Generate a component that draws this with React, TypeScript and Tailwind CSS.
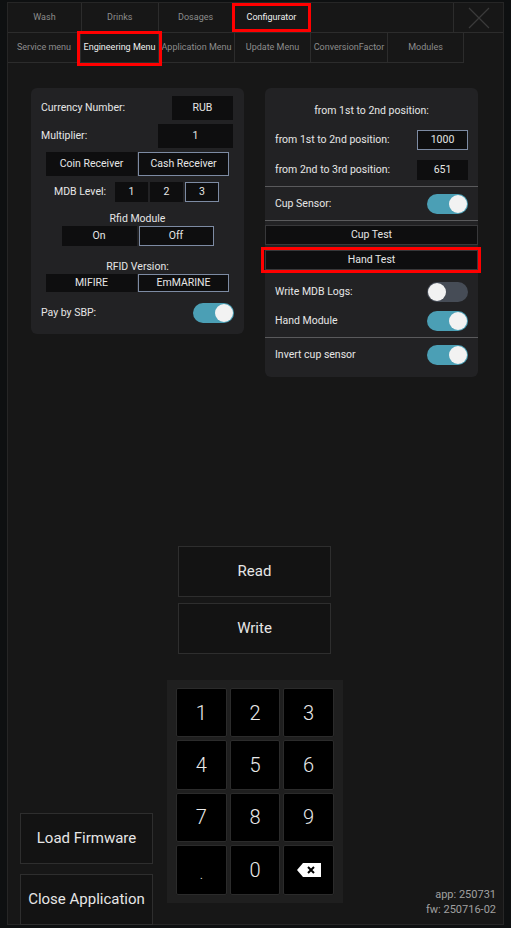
import React from "react";

const font = { fontFamily: "Roboto, 'Liberation Sans', sans-serif" };

function Toggle({ on }: { on: boolean }) {
  return (
    <div
      className={
        "w-[41px] h-[20px] rounded-full flex items-center px-[1px] " +
        (on ? "bg-[#4b9fb5] justify-end" : "bg-[#464c56] justify-start")
      }
    >
      <div className="w-[18px] h-[18px] rounded-full bg-[#f2f2f2]" />
    </div>
  );
}

function Box({ children, w, active }: { children: React.ReactNode; w: string; active?: boolean }) {
  return (
    <div
      className={
        w +
        " h-full flex items-center justify-center bg-[#0e0e0f] border " +
        (active ? "border-[#7d8ba3]" : "border-[#0e0e0f]")
      }
    >
      {children}
    </div>
  );
}

export default function App() {
  const keys = ["1", "2", "3", "4", "5", "6", "7", "8", "9", ".", "0", "del"];
  return (
    <div style={font} className="w-[511px] h-[928px] bg-[#0e1011] relative overflow-hidden text-[#e6e6e6]">
      <div className="absolute left-[7px] top-[2px] w-[497px] h-[923px] bg-[#171717] border border-[#262626]">
        {/* Tab row 1 */}
        <div className="flex h-[30px] text-[9px] text-[#8c8c8c]">
          <div className="w-[74px] border-r border-b border-[#2c2c2c] flex items-center justify-center">Wash</div>
          <div className="w-[77px] border-r border-b border-[#2c2c2c] flex items-center justify-center">Drinks</div>
          <div className="w-[75px] border-r border-b border-[#2c2c2c] flex items-center justify-center">Dosages</div>
          <div className="w-[77px] border-r border-b border-[#2c2c2c] flex items-center justify-center text-[#f0f0f0] relative">
            Configurator
            <div className="absolute left-[-2px] top-[0px] w-[79px] h-[29px] border-[3px] border-[#ff0000]" />
          </div>
          <div className="w-[143px] border-b border-[#2c2c2c]" />
          <div className="w-[50px] border-l border-b border-[#2c2c2c] flex items-center justify-center">
            <svg width="24" height="24" viewBox="0 0 24 24">
              <path d="M2 2 L22 22 M22 2 L2 22" stroke="#3a3a3a" strokeWidth="1.2" />
            </svg>
          </div>
        </div>
        {/* Tab row 2 */}
        <div className="flex h-[30px] text-[9px] text-[#8c8c8c]">
          <div className="w-[73px] border-r border-b border-[#2c2c2c] flex items-center justify-center">Service menu</div>
          <div className="w-[78px] border-r border-b border-[#2c2c2c] flex items-center justify-center text-[#f0f0f0] relative">
            Engineering Menu
            <div className="absolute left-[-4px] top-[-2px] w-[85px] h-[35px] border-[3px] border-[#ff0000]" />
          </div>
          <div className="w-[76px] border-r border-b border-[#2c2c2c] flex items-center justify-center">Application Menu</div>
          <div className="w-[76px] border-r border-b border-[#2c2c2c] flex items-center justify-center">Update Menu</div>
          <div className="w-[77px] border-r border-b border-[#2c2c2c] flex items-center justify-center">ConversionFactor</div>
          <div className="w-[76px] border-r border-b border-[#2c2c2c] flex items-center justify-center">Modules</div>
        </div>

        {/* Panels */}
        <div className="flex items-start gap-[21px] ml-[23px] mt-[25px]">
          {/* Left panel */}
          <div className="w-[213px] h-[246px] bg-[#222224] rounded-[6px] pt-[8px] text-[10.5px]">
            <div className="flex items-center justify-between h-[24px] pl-[10px] pr-[11px]">
              <span>Currency Number:</span>
              <Box w="w-[61px]">RUB</Box>
            </div>
            <div className="flex items-center justify-between h-[24px] mt-[4px] pl-[10px] pr-[11px]">
              <span>Multiplier:</span>
              <Box w="w-[75px]">1</Box>
            </div>
            <div className="flex h-[24px] mt-[4px] px-[15px] gap-[1px]">
              <Box w="w-[91px]">Coin Receiver</Box>
              <Box w="w-[91px]" active>Cash Receiver</Box>
            </div>
            <div className="flex items-center h-[20px] mt-[6px] pl-[23px]">
              <span className="w-[61px]">MDB Level:</span>
              <div className="flex h-full gap-[2px]">
                <Box w="w-[33px]">1</Box>
                <Box w="w-[33px]">2</Box>
                <Box w="w-[34px]" active>3</Box>
              </div>
            </div>
            <div className="text-center mt-[9px] h-[15px] leading-[15px]">Rfid Module</div>
            <div className="flex justify-center h-[20px] gap-[2px]">
              <Box w="w-[75px]">On</Box>
              <Box w="w-[75px]" active>Off</Box>
            </div>
            <div className="text-center mt-[13px] h-[15px] leading-[15px]">RFID Version:</div>
            <div className="flex h-[18px] px-[15px] gap-[1px]">
              <Box w="w-[91px]">MIFIRE</Box>
              <Box w="w-[91px]" active>EmMARINE</Box>
            </div>
            <div className="flex items-center justify-between h-[20px] mt-[11px] pl-[10px] pr-[10px]">
              <span>Pay by SBP:</span>
              <Toggle on />
            </div>
          </div>

          {/* Right panel */}
          <div className="w-[213px] h-[289px] bg-[#222224] rounded-[6px] text-[10.5px]">
            <div className="text-center pt-[15px] h-[30px]">from 1st to 2nd position:</div>
            <div className="flex items-center justify-between h-[20px] mt-[12px] px-[10px]">
              <span>from 1st to 2nd position:</span>
              <Box w="w-[51px]" active>1000</Box>
            </div>
            <div className="flex items-center justify-between h-[20px] mt-[10px] px-[10px]">
              <span>from 2nd to 3rd position:</span>
              <Box w="w-[51px]">651</Box>
            </div>
            <div className="h-[1px] bg-[#5a5a5c] mt-[6px]" />
            <div className="flex items-center justify-between h-[20px] mt-[7px] px-[10px]">
              <span>Cup Sensor:</span>
              <Toggle on />
            </div>
            <div className="h-[1px] bg-[#5a5a5c] mt-[6px]" />
            <div className="h-[20px] mt-[4px] bg-[#0e0e0f] border border-[#38383a] flex items-center justify-center">Cup Test</div>
            <div className="h-[20px] mt-[5px] bg-[#0e0e0f] border border-[#38383a] flex items-center justify-center relative">
              Hand Test
              <div className="absolute left-[-5px] right-[-4px] top-[-4px] bottom-[-4px] border-[3px] border-[#ff0000]" />
            </div>
            <div className="flex items-center justify-between h-[20px] mt-[12px] px-[10px]">
              <span>Write MDB Logs:</span>
              <Toggle on={false} />
            </div>
            <div className="flex items-center justify-between h-[20px] mt-[9px] px-[10px]">
              <span>Hand Module</span>
              <Toggle on />
            </div>
            <div className="h-[1px] bg-[#5a5a5c] mt-[6px]" />
            <div className="flex items-center justify-between h-[20px] mt-[7px] px-[10px]">
              <span>Invert cup sensor</span>
              <Toggle on />
            </div>
          </div>
        </div>

        {/* Read / Write */}
        <div className="flex flex-col items-center gap-[6px] mt-[169px] text-[15px] pr-[2px]">
          <div className="w-[153px] h-[51px] bg-[#131313] border border-[#2e2e2e] flex items-center justify-center">Read</div>
          <div className="w-[153px] h-[51px] bg-[#131313] border border-[#2e2e2e] flex items-center justify-center">Write</div>
        </div>

        {/* Bottom area */}
        <div className="flex mt-[26px] h-[245px]">
          <div className="w-[159px] flex flex-col justify-end pl-[12px] gap-[10px] text-[15px]">
            <div className="w-[133px] h-[51px] bg-[#131313] border border-[#2e2e2e] flex items-center justify-center">Load Firmware</div>
            <div className="w-[133px] h-[51px] bg-[#131313] border border-[#2e2e2e] flex items-center justify-center">Close Application</div>
          </div>
          <div className="w-[176px] h-[223px] bg-[#1f1f1f] grid grid-cols-3 gap-[3px] px-[9px] py-[8px]">
            {keys.map((k) => (
              <div
                key={k}
                className="bg-[#000000] border border-[#2b2b2b] rounded-[2px] flex items-center justify-center text-[20px] text-[#eaeaea] font-light"
              >
                {k === "del" ? (
                  <svg width="24" height="14" viewBox="0 0 24 14">
                    <path d="M0 7 L6 0 H24 V14 H6 Z" fill="#ffffff" />
                    <path d="M11 4 L17 10 M17 4 L11 10" stroke="#000" strokeWidth="2" />
                  </svg>
                ) : k === "." ? (
                  <span className="text-[14px] mt-[10px]">.</span>
                ) : (
                  k
                )}
              </div>
            ))}
          </div>
          <div className="flex-1 flex flex-col justify-end items-end pr-[7px] pb-[8px] text-[11px] text-[#a0a0a0] leading-[15px]">
            <div>app: 250731</div>
            <div>fw: 250716-02</div>
          </div>
        </div>
      </div>
    </div>
  );
}
